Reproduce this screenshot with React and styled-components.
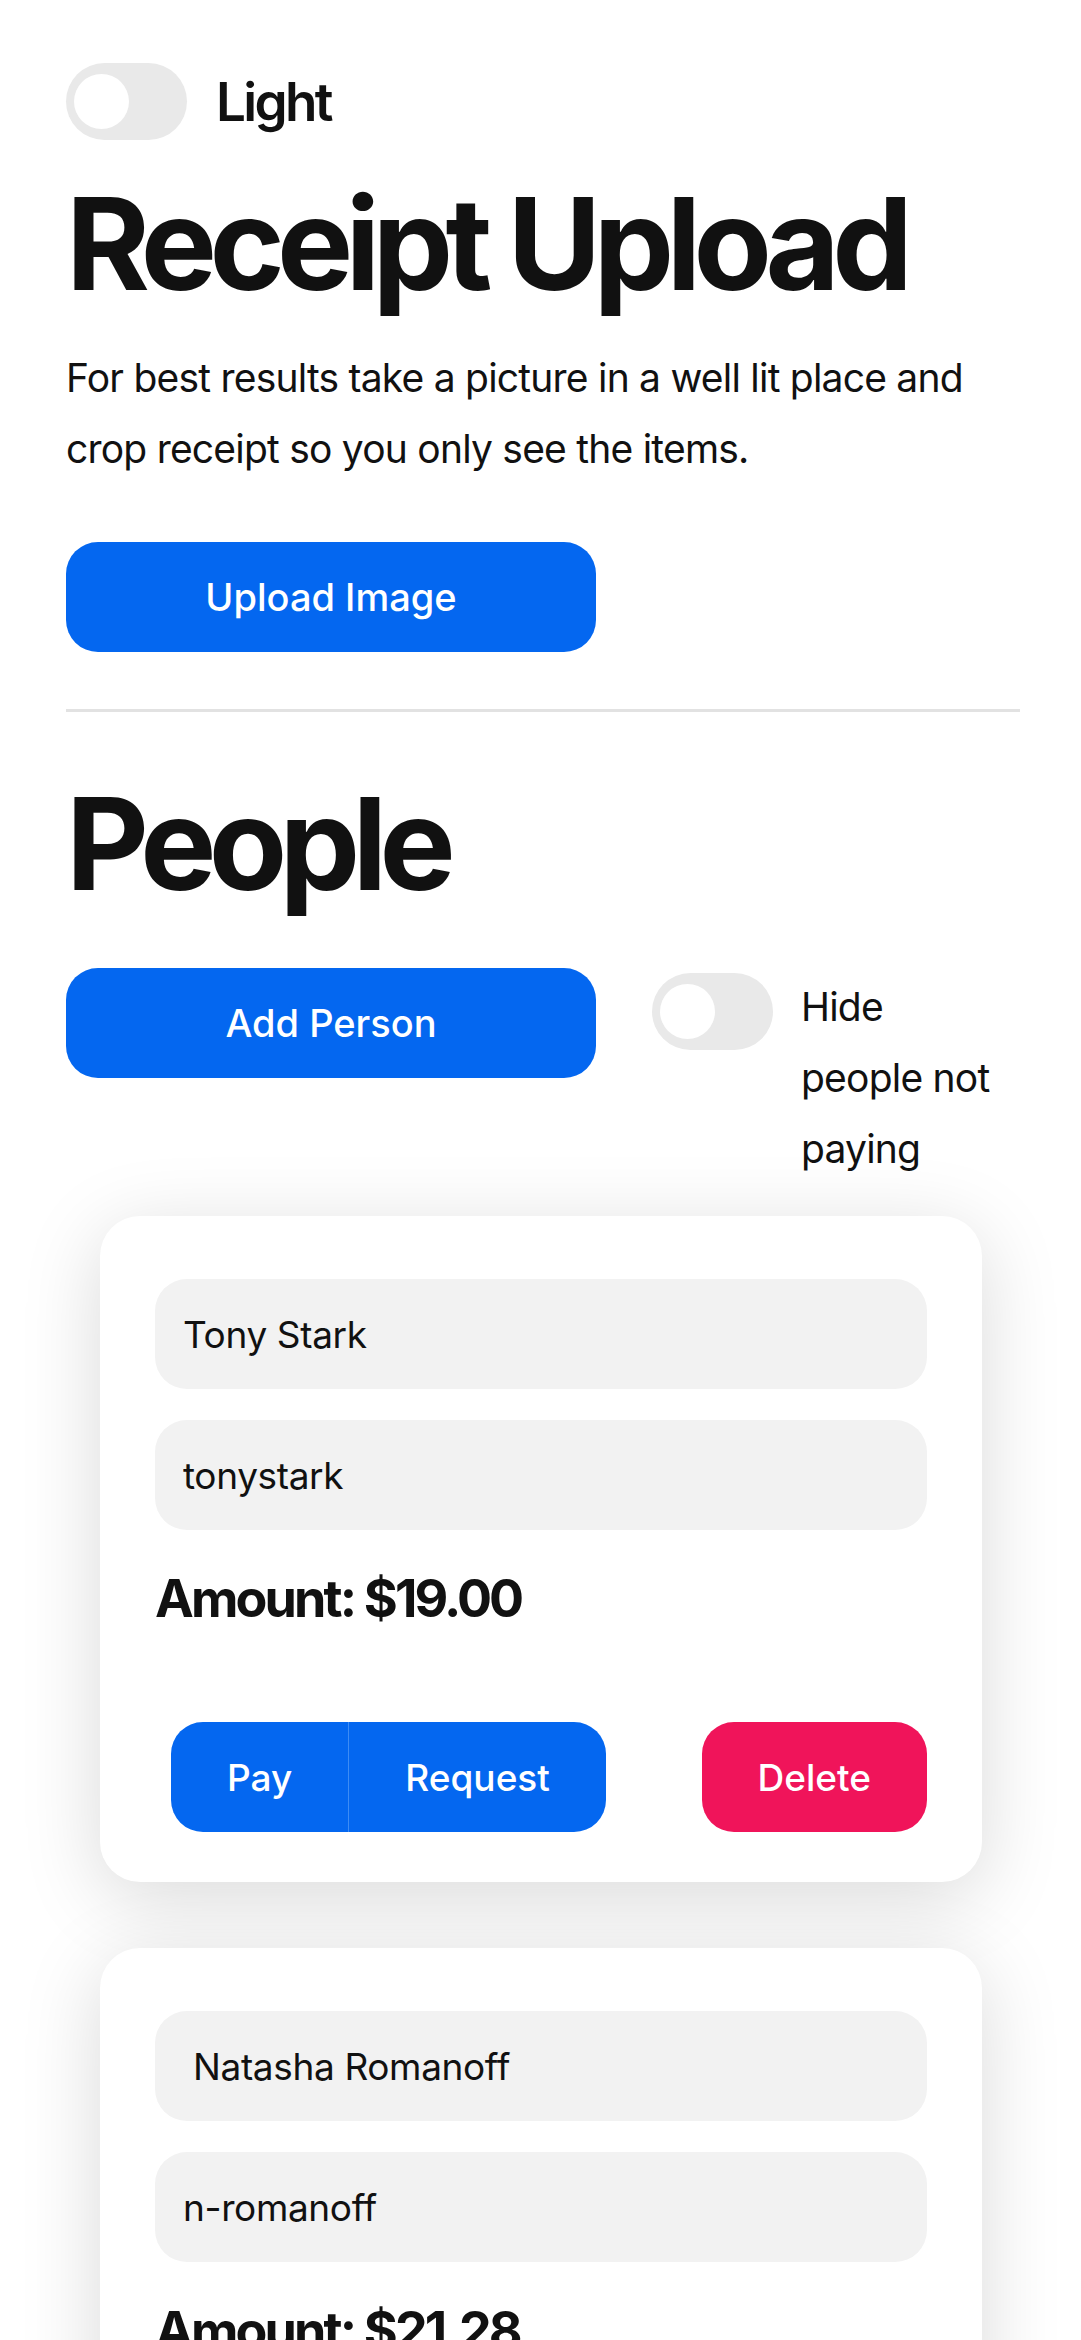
import React, { useState } from "react";
import styled, { createGlobalStyle } from "styled-components";

const GlobalStyle = createGlobalStyle`
  * {
    box-sizing: border-box;
  }
  html, body {
    margin: 0;
    padding: 0;
    background: #ffffff;
  }
  body {
    font-family: Inter, "Noto Sans", "Liberation Sans", sans-serif;
    color: #111111;
  }
`;

const Page = styled.div`
  width: 1081px;
  padding: 63px 61px 40px 66px;
`;

const ThemeRow = styled.div`
  display: flex;
  align-items: center;
  gap: 29px;
`;

const Track = styled.button`
  width: 121px;
  height: 77px;
  flex: none;
  border: none;
  border-radius: 39px;
  background: ${({ on }) => (on ? "#34c759" : "#e9e9e9")};
  padding: 0 8px;
  display: flex;
  align-items: center;
  justify-content: ${({ on }) => (on ? "flex-end" : "flex-start")};
  cursor: pointer;
  margin-top: ${({ offset }) => offset || 0}px;
`;

const Knob = styled.span`
  width: 55px;
  height: 55px;
  border-radius: 50%;
  background: #ffffff;
`;

const ThemeLabel = styled.span`
  font-size: 53px;
  font-weight: 600;
  letter-spacing: -0.05em;
`;

const Title = styled.h1`
  margin: ${({ top }) => top}px 0 0;
  font-size: 128px;
  line-height: 128px;
  font-weight: 700;
  letter-spacing: -0.06em;
`;

const Intro = styled.p`
  margin: 34px 0 0;
  font-size: 39px;
  line-height: 71px;
  letter-spacing: -0.02em;
`;

const PrimaryButton = styled.button`
  width: 530px;
  height: 110px;
  flex: none;
  border: none;
  border-radius: 32px;
  background: #0467f0;
  color: #ffffff;
  font-family: inherit;
  font-size: 38px;
  font-weight: 500;
  margin-top: ${({ top }) => top || 0}px;
  cursor: pointer;
`;

const Divider = styled.hr`
  margin: 57px 0 0;
  border: none;
  height: 3px;
  background: #e2e2e2;
`;

const PeopleBar = styled.div`
  display: flex;
  align-items: flex-start;
  margin-top: 60px;
`;

const HideToggle = styled.div`
  margin-left: 56px;
`;

const HideLabel = styled.span`
  margin-left: 28px;
  margin-top: 3px;
  width: 200px;
  font-size: 39px;
  line-height: 71px;
  letter-spacing: -0.02em;
`;

const CardList = styled.div`
  display: flex;
  flex-direction: column;
  gap: 66px;
  margin-top: 32px;
  margin-left: 34px;
  width: 882px;
`;

const Card = styled.div`
  background: #ffffff;
  border-radius: 40px;
  padding: 63px 55px 50px;
  box-shadow: 0 16px 80px rgba(0, 0, 0, 0.15);
`;

const Field = styled.input`
  display: block;
  width: 100%;
  height: 110px;
  border: none;
  outline: none;
  border-radius: 32px;
  background: #f2f2f2;
  padding: 0 28px;
  font-family: inherit;
  font-size: 37px;
  color: #111111;
  letter-spacing: -0.01em;
  & + & {
    margin-top: 31px;
  }
`;

const Amount = styled.div`
  margin-top: 38px;
  font-size: 52px;
  line-height: 62px;
  font-weight: 700;
  letter-spacing: -0.055em;
`;

const Actions = styled.div`
  display: flex;
  justify-content: space-between;
  align-items: center;
  margin-top: 92px;
  padding-left: 16px;
`;

const Segmented = styled.div`
  display: flex;
  border-radius: 32px;
  overflow: hidden;
`;

const ActionButton = styled.button`
  height: 110px;
  border: none;
  padding: 0 56px;
  background: ${({ danger }) => (danger ? "#f0145a" : "#0467f0")};
  border-radius: ${({ danger }) => (danger ? "32px" : "0")};
  color: #ffffff;
  font-family: inherit;
  font-size: 37px;
  font-weight: 500;
  cursor: pointer;
  & + & {
    border-left: 1px solid #3d8cf5;
  }
`;

const Switch = ({ on, onClick, offset }) => (
  <Track on={on ? 1 : 0} offset={offset} onClick={onClick}>
    <Knob />
  </Track>
);

const people = [
  { name: "Tony Stark", handle: "tonystark", amount: "19.00" },
  { name: " Natasha Romanoff", handle: "n-romanoff", amount: "21.28" },
];

const App = () => {
  const [dark, setDark] = useState(false);
  const [hide, setHide] = useState(false);

  return (
    <Page>
      <GlobalStyle />
      <ThemeRow>
        <Switch on={dark} onClick={() => setDark(!dark)} />
        <ThemeLabel>Light</ThemeLabel>
      </ThemeRow>

      <Title top={40}>Receipt Upload</Title>
      <Intro>
        For best results take a picture in a well lit place and crop receipt
        so you only see the items.
      </Intro>
      <PrimaryButton top={58}>Upload Image</PrimaryButton>

      <Divider />

      <Title top={68}>People</Title>
      <PeopleBar>
        <PrimaryButton>Add Person</PrimaryButton>
        <HideToggle>
          <Switch on={hide} offset={5} onClick={() => setHide(!hide)} />
        </HideToggle>
        <HideLabel>Hide people not paying</HideLabel>
      </PeopleBar>

      <CardList>
        {people.map((p) => (
          <Card key={p.handle}>
            <Field readOnly value={p.name} />
            <Field readOnly value={p.handle} />
            <Amount>Amount: ${p.amount}</Amount>
            <Actions>
              <Segmented>
                <ActionButton>Pay</ActionButton>
                <ActionButton>Request</ActionButton>
              </Segmented>
              <ActionButton danger>Delete</ActionButton>
            </Actions>
          </Card>
        ))}
      </CardList>
    </Page>
  );
};

export default App;
